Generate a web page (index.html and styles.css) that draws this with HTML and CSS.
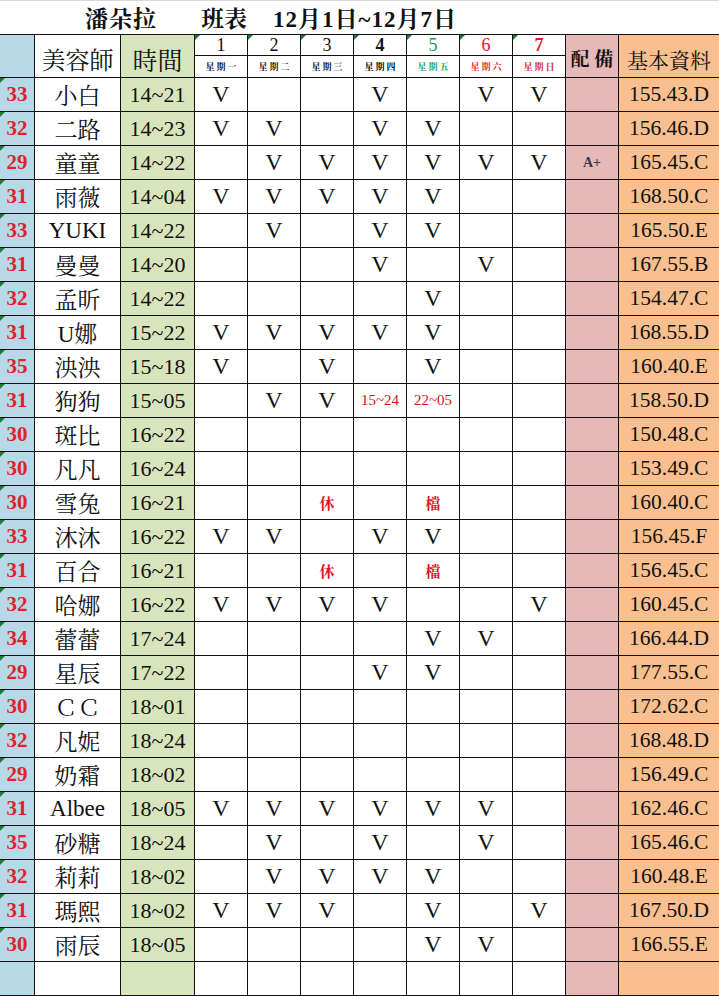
FILE: index.html
```html
<!DOCTYPE html>
<html lang="zh-Hant">
<head>
<meta charset="utf-8">
<title>潘朵拉 班表</title>
<link rel="stylesheet" href="styles.css">
</head>
<body>
<div class="page">
  <div class="title">
    <span class="t-brand">潘朵拉</span>
    <span class="t-sheet">班表</span>
    <span class="t-date">12月1日~12月7日</span>
  </div>
  <div class="sheet">
    <div class="h2 blue"></div>
    <div class="h2 h-name">美容師</div>
    <div class="h2 green h-time">時間</div>
    <div class="dn tri">1</div>
    <div class="dn tri">2</div>
    <div class="dn tri">3</div>
    <div class="dn tri bold">4</div>
    <div class="dn tri c-green">5</div>
    <div class="dn tri c-red">6</div>
    <div class="dn tri c-red bold">7</div>
    <div class="h2 pink h-eq">配 備</div>
    <div class="h2 orange h-info">基本資料</div>
    <div class="wd">星期一</div>
    <div class="wd">星期二</div>
    <div class="wd">星期三</div>
    <div class="wd strong">星期四</div>
    <div class="wd c-green">星期五</div>
    <div class="wd c-red">星期六</div>
    <div class="wd c-red">星期日</div>

    <div class="n blue tri">33</div><div class="nm">小白</div><div class="t green">14~21</div>
    <div class="d">V</div><div class="d"></div><div class="d"></div><div class="d">V</div><div class="d"></div><div class="d">V</div><div class="d">V</div>
    <div class="eq pink"></div><div class="info orange">155.43.D</div>

    <div class="n blue tri">32</div><div class="nm">二路</div><div class="t green">14~23</div>
    <div class="d">V</div><div class="d">V</div><div class="d"></div><div class="d">V</div><div class="d">V</div><div class="d"></div><div class="d"></div>
    <div class="eq pink"></div><div class="info orange">156.46.D</div>

    <div class="n blue tri">29</div><div class="nm">童童</div><div class="t green">14~22</div>
    <div class="d"></div><div class="d">V</div><div class="d">V</div><div class="d">V</div><div class="d">V</div><div class="d">V</div><div class="d">V</div>
    <div class="eq pink">A+</div><div class="info orange">165.45.C</div>

    <div class="n blue tri">31</div><div class="nm">雨薇</div><div class="t green">14~04</div>
    <div class="d">V</div><div class="d">V</div><div class="d">V</div><div class="d">V</div><div class="d">V</div><div class="d"></div><div class="d"></div>
    <div class="eq pink"></div><div class="info orange">168.50.C</div>

    <div class="n blue tri">33</div><div class="nm">YUKI</div><div class="t green">14~22</div>
    <div class="d"></div><div class="d">V</div><div class="d"></div><div class="d">V</div><div class="d">V</div><div class="d"></div><div class="d"></div>
    <div class="eq pink"></div><div class="info orange">165.50.E</div>

    <div class="n blue tri">31</div><div class="nm">曼曼</div><div class="t green">14~20</div>
    <div class="d"></div><div class="d"></div><div class="d"></div><div class="d">V</div><div class="d"></div><div class="d">V</div><div class="d"></div>
    <div class="eq pink"></div><div class="info orange">167.55.B</div>

    <div class="n blue tri">32</div><div class="nm">孟昕</div><div class="t green">14~22</div>
    <div class="d"></div><div class="d"></div><div class="d"></div><div class="d"></div><div class="d">V</div><div class="d"></div><div class="d"></div>
    <div class="eq pink"></div><div class="info orange">154.47.C</div>

    <div class="n blue tri">31</div><div class="nm">U娜</div><div class="t green">15~22</div>
    <div class="d">V</div><div class="d">V</div><div class="d">V</div><div class="d">V</div><div class="d">V</div><div class="d"></div><div class="d"></div>
    <div class="eq pink"></div><div class="info orange">168.55.D</div>

    <div class="n blue tri">35</div><div class="nm">泱泱</div><div class="t green">15~18</div>
    <div class="d">V</div><div class="d"></div><div class="d">V</div><div class="d"></div><div class="d">V</div><div class="d"></div><div class="d"></div>
    <div class="eq pink"></div><div class="info orange">160.40.E</div>

    <div class="n blue tri">31</div><div class="nm">狗狗</div><div class="t green">15~05</div>
    <div class="d"></div><div class="d">V</div><div class="d">V</div><div class="d note">15~24</div><div class="d note">22~05</div><div class="d"></div><div class="d"></div>
    <div class="eq pink"></div><div class="info orange">158.50.D</div>

    <div class="n blue tri">30</div><div class="nm">斑比</div><div class="t green">16~22</div>
    <div class="d"></div><div class="d"></div><div class="d"></div><div class="d"></div><div class="d"></div><div class="d"></div><div class="d"></div>
    <div class="eq pink"></div><div class="info orange">150.48.C</div>

    <div class="n blue tri">30</div><div class="nm">凡凡</div><div class="t green">16~24</div>
    <div class="d"></div><div class="d"></div><div class="d"></div><div class="d"></div><div class="d"></div><div class="d"></div><div class="d"></div>
    <div class="eq pink"></div><div class="info orange">153.49.C</div>

    <div class="n blue tri">30</div><div class="nm">雪兔</div><div class="t green">16~21</div>
    <div class="d"></div><div class="d"></div><div class="d rest">休</div><div class="d"></div><div class="d rest">檔</div><div class="d"></div><div class="d"></div>
    <div class="eq pink"></div><div class="info orange">160.40.C</div>

    <div class="n blue tri">33</div><div class="nm">沐沐</div><div class="t green">16~22</div>
    <div class="d">V</div><div class="d">V</div><div class="d"></div><div class="d">V</div><div class="d">V</div><div class="d"></div><div class="d"></div>
    <div class="eq pink"></div><div class="info orange">156.45.F</div>

    <div class="n blue tri">31</div><div class="nm">百合</div><div class="t green">16~21</div>
    <div class="d"></div><div class="d"></div><div class="d rest">休</div><div class="d"></div><div class="d rest">檔</div><div class="d"></div><div class="d"></div>
    <div class="eq pink"></div><div class="info orange">156.45.C</div>

    <div class="n blue tri">32</div><div class="nm">哈娜</div><div class="t green">16~22</div>
    <div class="d">V</div><div class="d">V</div><div class="d">V</div><div class="d">V</div><div class="d"></div><div class="d"></div><div class="d">V</div>
    <div class="eq pink"></div><div class="info orange">160.45.C</div>

    <div class="n blue tri">34</div><div class="nm">蕾蕾</div><div class="t green">17~24</div>
    <div class="d"></div><div class="d"></div><div class="d"></div><div class="d"></div><div class="d">V</div><div class="d">V</div><div class="d"></div>
    <div class="eq pink"></div><div class="info orange">166.44.D</div>

    <div class="n blue tri">29</div><div class="nm">星辰</div><div class="t green">17~22</div>
    <div class="d"></div><div class="d"></div><div class="d"></div><div class="d">V</div><div class="d">V</div><div class="d"></div><div class="d"></div>
    <div class="eq pink"></div><div class="info orange">177.55.C</div>

    <div class="n blue tri">30</div><div class="nm">ＣＣ</div><div class="t green">18~01</div>
    <div class="d"></div><div class="d"></div><div class="d"></div><div class="d"></div><div class="d"></div><div class="d"></div><div class="d"></div>
    <div class="eq pink"></div><div class="info orange">172.62.C</div>

    <div class="n blue tri">32</div><div class="nm">凡妮</div><div class="t green">18~24</div>
    <div class="d"></div><div class="d"></div><div class="d"></div><div class="d"></div><div class="d"></div><div class="d"></div><div class="d"></div>
    <div class="eq pink"></div><div class="info orange">168.48.D</div>

    <div class="n blue tri">29</div><div class="nm">奶霜</div><div class="t green">18~02</div>
    <div class="d"></div><div class="d"></div><div class="d"></div><div class="d"></div><div class="d"></div><div class="d"></div><div class="d"></div>
    <div class="eq pink"></div><div class="info orange">156.49.C</div>

    <div class="n blue tri">31</div><div class="nm">Albee</div><div class="t green">18~05</div>
    <div class="d">V</div><div class="d">V</div><div class="d">V</div><div class="d">V</div><div class="d">V</div><div class="d">V</div><div class="d"></div>
    <div class="eq pink"></div><div class="info orange">162.46.C</div>

    <div class="n blue tri">35</div><div class="nm">砂糖</div><div class="t green">18~24</div>
    <div class="d"></div><div class="d">V</div><div class="d"></div><div class="d">V</div><div class="d"></div><div class="d">V</div><div class="d"></div>
    <div class="eq pink"></div><div class="info orange">165.46.C</div>

    <div class="n blue tri">32</div><div class="nm">莉莉</div><div class="t green">18~02</div>
    <div class="d"></div><div class="d">V</div><div class="d">V</div><div class="d">V</div><div class="d">V</div><div class="d"></div><div class="d"></div>
    <div class="eq pink"></div><div class="info orange">160.48.E</div>

    <div class="n blue tri">31</div><div class="nm">瑪熙</div><div class="t green">18~02</div>
    <div class="d">V</div><div class="d">V</div><div class="d">V</div><div class="d"></div><div class="d">V</div><div class="d"></div><div class="d">V</div>
    <div class="eq pink"></div><div class="info orange">167.50.D</div>

    <div class="n blue tri">30</div><div class="nm">雨辰</div><div class="t green">18~05</div>
    <div class="d"></div><div class="d"></div><div class="d"></div><div class="d"></div><div class="d">V</div><div class="d">V</div><div class="d"></div>
    <div class="eq pink"></div><div class="info orange">166.55.E</div>

    <div class="n blue"></div><div class="nm"></div><div class="t green"></div>
    <div class="d"></div><div class="d"></div><div class="d"></div><div class="d"></div><div class="d"></div><div class="d"></div><div class="d"></div>
    <div class="eq pink"></div><div class="info orange"></div>
  </div>
</div>
</body>
</html>
```

FILE: styles.css
```css
html, body {
  margin: 0;
  padding: 0;
  background: #ffffff;
}

body {
  font-family: "Liberation Serif", "Noto Serif CJK TC", "Noto Sans CJK TC", serif;
  color: #111;
}

.page {
  width: 719px;
  height: 996px;
  overflow: hidden;
}

.title {
  height: 34px;
  display: flex;
  align-items: center;
  padding-left: 85px;
  font-size: 23px;
  font-weight: bold;
  border-top: 1px solid #d8d8d8;
  box-sizing: border-box;
}

.t-brand { letter-spacing: 1px; }
.t-sheet { margin-left: 44px; letter-spacing: 0; }
.t-date { margin-left: 26px; letter-spacing: 1px; }

.sheet {
  display: grid;
  grid-template-columns: 34px 85px 73px repeat(8, 52px) 100px;
  grid-template-rows: 20px 21px repeat(27, 33px);
  gap: 1px;
  padding: 1px 0;
  background: #111;
}

.sheet > div {
  background: #fff;
  display: flex;
  align-items: center;
  justify-content: center;
  position: relative;
  white-space: nowrap;
}

.h2 { grid-row: span 2; }

.blue { background: #b7d8e7 !important; }
.green { background: #d8e4bc !important; }
.pink { background: #e6b8b7 !important; }
.orange { background: #f9bf8f !important; }

.tri::before {
  content: "";
  position: absolute;
  left: 0;
  top: 0;
  border-top: 5px solid #1d7a32;
  border-right: 5px solid transparent;
}

.h-name { font-size: 24px; padding-top: 5px; }
.h-time { font-size: 25px; padding-top: 5px; }
.h-eq { font-size: 19px; font-weight: bold; padding-top: 2px; }
.h-info { font-size: 21px; padding-top: 6px; }

.dn { font-size: 18px; }
.wd {
  font-size: 9px;
  font-weight: bold;
  letter-spacing: 2px;
  padding-left: 2px;
}
.wd.strong { color: #000; }

.bold { font-weight: bold; }
.c-green { color: #16a150; }
.c-red { color: #e0161e; }

.n {
  font-size: 21px;
  font-weight: bold;
  color: #e0222b;
}

.nm { font-size: 23px; }
.t { font-size: 22px; }
.d { font-size: 24px; }

.note {
  font-size: 15px;
  color: #d0101a;
}

.rest {
  font-size: 15px;
  font-weight: bold;
  color: #e0101a;
}

.eq {
  font-size: 14px;
  font-weight: bold;
  color: #3a3550;
}

.info { font-size: 21.5px; }
```
